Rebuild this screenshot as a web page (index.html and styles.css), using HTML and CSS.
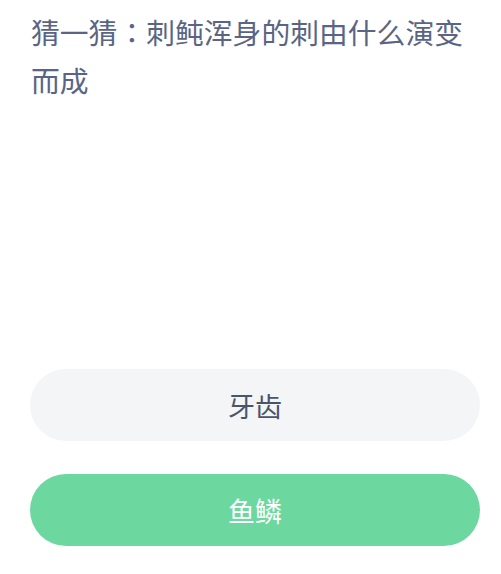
FILE: index.html
```html
<!DOCTYPE html>
<html lang="zh-CN">
<head>
<meta charset="utf-8">
<link rel="stylesheet" href="styles.css">
</head>
<body>
<div class="page">
  <h1 class="question">猜一猜<span class="colon" lang="ja">：</span>刺鲀浑身的刺由什么演变而成</h1>
  <div class="picture"></div>
  <div class="options">
    <div class="option">牙齿</div>
    <div class="option option-correct">鱼鳞</div>
  </div>
</div>
</body>
</html>
```

FILE: styles.css
```css
html, body {
  margin: 0;
  padding: 0;
  background: #ffffff;
}
.page {
  width: 501px;
  height: 574px;
  display: flex;
  flex-direction: column;
  font-family: "Noto Sans CJK SC", "Noto Sans", sans-serif;
}
.question {
  margin: 8px 0 0 0;
  padding: 0 31px;
  font-size: 28.8px;
  line-height: 48px;
  font-weight: 400;
  color: #5a6585;
}
.colon {
  font-family: "Noto Sans CJK JP", sans-serif;
}
.picture {
  height: 265px;
}
.options {
  display: flex;
  flex-direction: column;
  gap: 33px;
  padding-left: 30px;
}
.option {
  width: 450px;
  height: 72px;
  border-radius: 36px;
  background: #f4f5f7;
  color: #4b556a;
  font-size: 27px;
  display: flex;
  align-items: center;
  justify-content: center;
}
.option-correct {
  background: #6dd7a0;
  color: #ffffff;
}
```
